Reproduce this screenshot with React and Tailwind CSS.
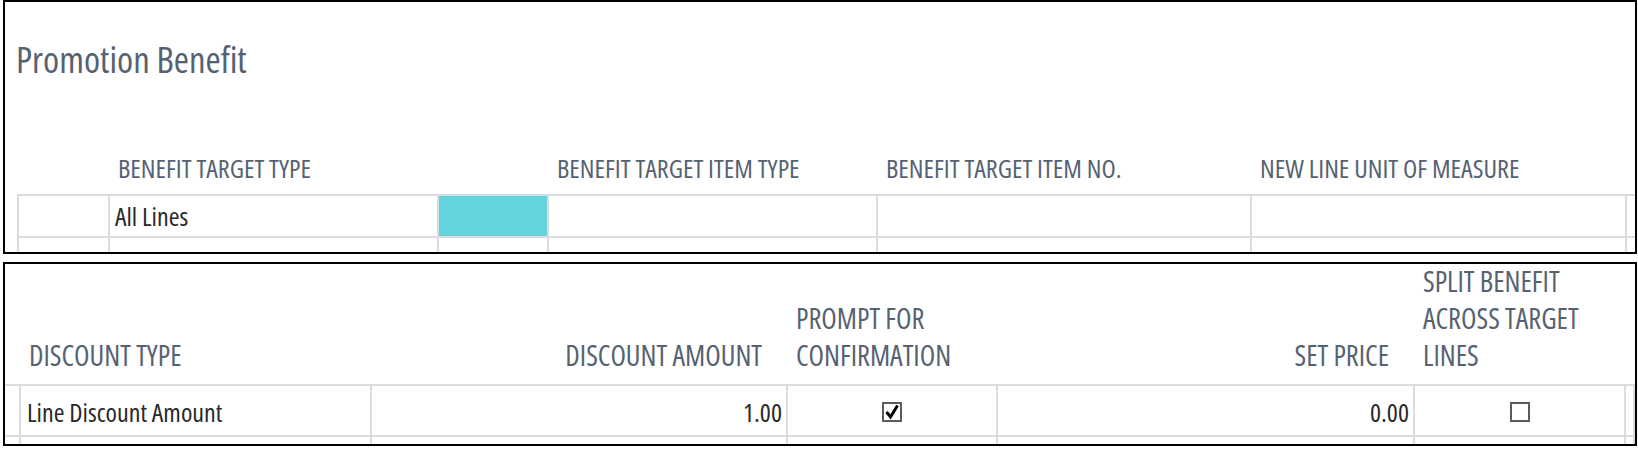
import React from 'react'

const headText = "text-[26.2px] leading-[30px] text-[#566272] uppercase [font-stretch:75%]"
const bodyText = "text-[26px] leading-[30px] text-[#2a2a2a] [font-stretch:75%]"

const topCols = [
  { w: 'w-[91px]', label: '' },
  { w: 'w-[329px]', label: 'Benefit Target Type', value: 'All Lines' },
  { w: 'w-[110px]', label: '', cyan: true },
  { w: 'w-[329px]', label: 'Benefit Target Item Type' },
  { w: 'w-[374px]', label: 'Benefit Target Item No.' },
  { w: 'w-[375px]', label: 'New Line Unit of Measure' },
  { w: 'flex-1', label: '' },
]

function CheckBox({ checked }) {
  return (
    <svg width="20" height="20" viewBox="0 0 20 20">
      <rect x="1" y="1" width="18" height="18" fill="#fff" stroke="#5b5b5b" strokeWidth="2" />
      {checked && (
        <path d="M4.5 10 L8.5 15 L15.5 3.5" fill="none" stroke="#000" strokeWidth="3" strokeLinejoin="miter" />
      )}
    </svg>
  )
}

function TopBox() {
  return (
    <section className="w-[1634px] h-[254px] border-2 border-black overflow-hidden">
      <h1 className="pl-[11px] pt-[37px] text-[36.7px] leading-[40px] text-[#566272] [font-stretch:75%]">
        Promotion Benefit
      </h1>

      <div className="ml-[12px]">
        {/* Column headers */}
        <div className="flex h-[115px] items-end pb-[11px]">
          {topCols.map((c, i) => (
            <div key={i} className={`${c.w} shrink-0 border-l-2 border-transparent pl-[8px] ${headText}`}>
              {c.label}
            </div>
          ))}
        </div>

        {/* Rows */}
        {[0, 1].map((r) => (
          <div key={r} className="flex h-[42px] border-t-2 border-[#d9dce0]">
            {topCols.map((c, i) => (
              <div
                key={i}
                className={`${c.w} shrink-0 border-l-2 border-[#d9dce0] flex items-center pl-[5px] ${bodyText} ${
                  c.cyan && r === 0 ? 'bg-[#64d4dc]' : ''
                }`}
              >
                {r === 0 ? c.value : ''}
              </div>
            ))}
          </div>
        ))}
      </div>
    </section>
  )
}

const bottomCols = [
  { w: 'w-[16px]' },
  { w: 'w-[351px]', label: ['Discount Type'], value: 'Line Discount Amount' },
  { w: 'w-[416px]', label: ['Discount Amount'], value: '1.00', right: true },
  { w: 'w-[210px]', label: ['Prompt for', 'Confirmation'], check: true, checked: true },
  { w: 'w-[417px]', label: ['Set Price'], value: '0.00', right: true },
  { w: 'w-[211px]', label: ['Split Benefit', 'across Target', 'Lines'], check: true, checked: false },
  { w: 'flex-1' },
]

function BottomBox() {
  return (
    <section className="mt-[8px] w-[1634px] h-[184px] border-2 border-black overflow-hidden">
      {/* Column headers */}
      <div className="flex h-[120px] items-end pb-[10px]">
        {bottomCols.map((c, i) => (
          <div
            key={i}
            className={`${c.w} shrink-0 border-r-2 border-transparent text-[28.4px] leading-[37px] text-[#566272] uppercase [font-stretch:75%] ${
              c.right ? 'text-right pr-[24px]' : 'pl-[8px]'
            }`}
          >
            {(c.label || []).map((l) => (
              <div key={l}>{l}</div>
            ))}
          </div>
        ))}
      </div>

      {/* Rows */}
      {[0, 1].map((r) => (
        <div key={r} className="flex h-[51px] border-t-2 border-[#d9dce0]">
          {bottomCols.map((c, i) => (
            <div
              key={i}
              className={`${c.w} shrink-0 border-r-2 border-[#d9dce0] flex items-center pt-[3px] ${bodyText} ${
                c.right ? 'justify-end pr-[4px]' : c.check ? 'justify-center' : 'pl-[6px]'
              } ${i === bottomCols.length - 1 ? 'border-r-0' : ''}`}
            >
              {r === 0 && c.value}
              {r === 0 && c.check && <CheckBox checked={c.checked} />}
            </div>
          ))}
        </div>
      ))}
    </section>
  )
}

export default function App() {
  return (
    <div className="w-[1638px] h-[451px] bg-white pl-[3px] font-['Open_Sans',sans-serif]">
      <TopBox />
      <BottomBox />
    </div>
  )
}
